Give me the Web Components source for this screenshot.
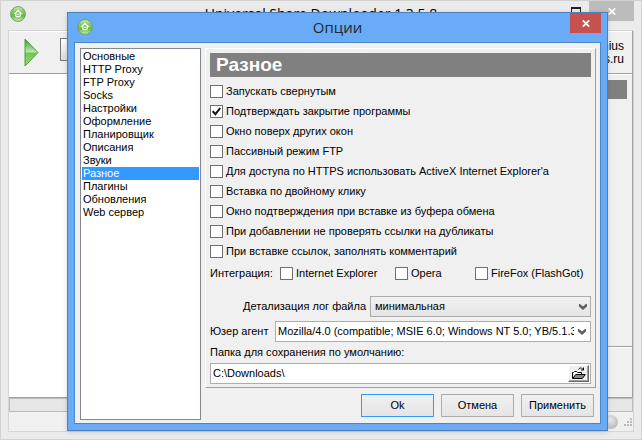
<!DOCTYPE html>
<html lang="ru">
<head>
<meta charset="utf-8">
<title>Опции</title>
<style>
html, body { height: 100%; }
body { margin: 0; overflow: hidden; font: 11px/13px "Liberation Sans", Arial, sans-serif; color: #000; }
</style>
</head>
<body>
<app-window></app-window>

<script>
const define = (name, html, setup) => {
  const template = document.createElement('template');
  template.innerHTML = html;
  customElements.define(name, class extends HTMLElement {
    constructor() {
      super();
      this.attachShadow({ mode: 'open' }).append(template.content.cloneNode(true));
    }
    connectedCallback() { if (setup) setup(this, this.shadowRoot); }
  });
};

define('app-logo', `
<style>:host { display: block; width: 16px; height: 16px; } svg { display: block; }</style>
<svg width="16" height="16" viewBox="0 0 16 16" aria-hidden="true">
  <defs><linearGradient id="g" x1="0" y1="0" x2="0" y2="1">
    <stop offset="0" stop-color="#d3f3bd"/><stop offset=".3" stop-color="#84cc66"/><stop offset=".65" stop-color="#68bb48"/><stop offset="1" stop-color="#c8fba4"/>
  </linearGradient></defs>
  <circle cx="8" cy="8" r="7.4" fill="url(#g)" stroke="#6f9f60" stroke-width="1"/>
  <path d="M8 4.400 4.900 7.500h.9v2.300c0 .5.300.8.8.8h2.800c.5 0 .8-.3.8-.8V7.500h.9z" fill="none" stroke="#fff" stroke-width="1.200"/>
  <path d="M7 9.200c0-1.500 2-1.500 2 0" fill="none" stroke="#fff"/>
</svg>`);

define('close-button', `
<style>
:host { display: block; }
button { display: grid; place-items: center; width: 100%; height: 20px; padding: 0; border: 0; background: var(--close-color, #bcbcbc); }
</style>
<button type="button" aria-label="Закрыть"><svg width="8" height="7" viewBox="0 0 8 7"><path d="M.8.3 7.2 6.7M7.2.3.8 6.7" stroke="#fff" stroke-width="1.7"/></svg></button>`);

define('category-list', `
<style>
:host { display: block; background: #fff; border: 1px solid #828790; padding: 1px; box-sizing: border-box; }
</style>
<nav aria-label="Разделы"><slot></slot></nav>`);

define('category-item', `
<style>
:host { display: block; }
button { display: block; width: 100%; height: 13px; padding: 0 0 0 1px; border: 0; background: none; font: inherit; color: inherit; text-align: left; white-space: nowrap; }
:host([current]) button { background: #3399ff; color: #fff; }
</style>
<button type="button"><slot></slot></button>`,
(host, root) => { if (host.hasAttribute('current')) root.querySelector('button').setAttribute('aria-current', 'page'); });

define('check-option', `
<style>
:host { display: block; }
label { display: flex; align-items: center; gap: 3px; height: 13px; white-space: nowrap; }
input { appearance: none; display: grid; place-items: center; flex: none; width: 13px; height: 13px; margin: 0; border: 1px solid #707070; background: #fff; }
.box { display: grid; flex: none; }
.box > * { grid-area: 1 / 1; }
svg { display: none; place-self: center; pointer-events: none; }
input:checked + svg { display: block; }
</style>
<label><span class="box"><input type="checkbox"><svg width="9" height="9" viewBox="0 0 9 9"><path d="M.7 4.2 3.4 7.2 8.2 1" fill="none" stroke="#111" stroke-width="2"/></svg></span><slot></slot></label>`,
(host, root) => { root.querySelector('input').checked = host.hasAttribute('checked'); });

const arrow = '<svg width="8" height="6" viewBox="0 0 8 6" aria-hidden="true"><path d="M0 0h1l3 2.4L7 0h1v2.4L4 6 0 2.4z" fill="#606060"/></svg>';

define('log-field', `
<style>
:host { display: flex; justify-content: flex-end; align-items: center; gap: 4px; }
.box { display: grid; flex: 0 0 58%; }
.box > * { grid-area: 1 / 1; }
select { appearance: none; box-sizing: border-box; width: 100%; height: 21px; margin: 0; padding: 0 20px 0 4px; border: 1px solid #acacac; border-radius: 0; background: linear-gradient(#f0f0f0, #e5e5e5); font: inherit; color: #000; }
svg { place-self: center end; margin-right: 4px; pointer-events: none; }
label { white-space: nowrap; }
</style>
<label for="log">Детализация лог файла</label>
<span class="box"><select id="log"><option>минимальная</option></select>${arrow}</span>`);

define('agent-field', `
<style>
:host { display: flex; align-items: center; }
label { flex: 0 0 65px; white-space: nowrap; }
.box { display: flex; flex: 1; box-sizing: border-box; min-width: 0; height: 21px; border: 1px solid #abadb3; background: #fff; }
input { flex: 1; min-width: 0; margin: 0 0 0 2px; padding: 0; border: 0; background: none; font: inherit; color: #000; }
button { display: grid; place-items: center; width: 16px; padding: 0; border: 0; background: none; }
</style>
<label for="agent">Юзер агент</label>
<span class="box"><input id="agent" type="text" value="Mozilla/4.0 (compatible; MSIE 6.0; Windows NT 5.0; YB/5.1.3)"><button type="button" aria-label="Список">${arrow}</button></span>`);

define('folder-field', `
<style>
:host { display: grid; gap: 4px; }
.box { display: flex; box-sizing: border-box; height: 21px; border: 1px solid #abadb3; background: #fff; }
input { flex: 1; min-width: 0; margin: 0 0 0 2px; padding: 0; border: 0; background: none; font: inherit; color: #000; }
button { display: grid; place-items: center; width: 21px; margin: 1px; padding: 0; border: 1px solid; border-color: #fff #696969 #696969 #fff; box-shadow: inset -1px -1px #a0a0a0; background: #f0f0f0; }
</style>
<label for="folder">Папка для сохранения по умолчанию:</label>
<span class="box"><input id="folder" type="text" value="C:\\Downloads\\"><button type="button" aria-label="Выбрать папку"><svg width="14" height="13" viewBox="0 0 14 13"><path d="M.5 11.5v-6h1l1-1h2l1 1h4v2" fill="#fff" stroke="#000"/><path d="m.7 11.5 3-4h9.6l-3 4z" fill="#888" stroke="#000"/><path d="M6.5 2.5c1-2 3.500-2 4.500 0M11.500.5v2.500h-2.500" fill="none" stroke="#000"/></svg></button></span>`);

define('push-button', `
<style>
:host { display: block; width: 73px; }
button { box-sizing: border-box; width: 100%; height: 23px; padding: 0; border: 1px solid #acacac; background: linear-gradient(#f0f0f0, #e5e5e5); font: inherit; color: #000; }
:host([default]) button { border-color: #3399ff; }
</style>
<button type="button"><slot></slot></button>`);

define('options-dialog', `
<style>
:host { display: flex; flex-direction: column; box-sizing: border-box; border: 1px solid #4b80bd; background: #6aabf7; box-shadow: 0 1px 5px rgba(0,0,0,.15); }
header { display: grid; grid-template-columns: 76px 1fr 76px; align-items: start; flex: 0 0 29px; }
app-logo { margin: 6px 0 0 9px; }
h1 { margin: 4px 0 0; font: 15px/20px "Open Sans", sans-serif; color: #1f2730; text-align: center; }
close-button { justify-self: end; width: 31px; margin-right: 6px; --close-color: #c75050; }
main { flex: 1; display: grid; grid-template-columns: 121px 1fr; column-gap: 4px; min-height: 0; margin: 0 6px 6px; border: 1px solid #4b86cc; background: #f0f0f0; padding: 5px 4px 3px 5px; }
.side { display: flex; flex-direction: column; }
section { box-sizing: border-box; padding: 4px 4px 3px; border: 1px solid; border-color: #fff #a0a0a0 #a0a0a0 #fff; }
h2 { margin: 0 0 8px; padding-left: 6px; background: #808080; color: #fff; font: bold 19px/24px "Liberation Sans", Arial, sans-serif; }
.checks { display: grid; gap: 7px; }
.integration { display: grid; grid-template-columns: 70px 115px 80px 1fr; align-items: center; margin: 9px 0 16px; }
agent-field { margin: 4px 0; }
footer { display: flex; justify-content: flex-end; gap: 7px; padding: 6px 2px 2px 0; }
</style>
<header><app-logo></app-logo><h1>Опции</h1><close-button></close-button></header>
<main>
  <category-list>
    <category-item>Основные</category-item>
    <category-item>HTTP Proxy</category-item>
    <category-item>FTP Proxy</category-item>
    <category-item>Socks</category-item>
    <category-item>Настройки</category-item>
    <category-item>Оформление</category-item>
    <category-item>Планировщик</category-item>
    <category-item>Описания</category-item>
    <category-item>Звуки</category-item>
    <category-item current>Разное</category-item>
    <category-item>Плагины</category-item>
    <category-item>Обновления</category-item>
    <category-item>Web сервер</category-item>
  </category-list>
  <div class="side">
    <section>
      <h2>Разное</h2>
      <div class="checks">
        <check-option>Запускать свернутым</check-option>
        <check-option checked>Подтверждать закрытие программы</check-option>
        <check-option>Окно поверх других окон</check-option>
        <check-option>Пассивный режим FTP</check-option>
        <check-option>Для доступа по HTTPS использовать ActiveX Internet Explorer'а</check-option>
        <check-option>Вставка по двойному клику</check-option>
        <check-option>Окно подтверждения при вставке из буфера обмена</check-option>
        <check-option>При добавлении не проверять ссылки на дубликаты</check-option>
        <check-option>При вставке ссылок, заполнять комментарий</check-option>
      </div>
      <div class="integration">
        <span>Интеграция:</span>
        <check-option>Internet Explorer</check-option>
        <check-option>Opera</check-option>
        <check-option>FireFox (FlashGot)</check-option>
      </div>
      <log-field></log-field>
      <agent-field></agent-field>
      <folder-field></folder-field>
    </section>
    <footer>
      <push-button default>Ok</push-button>
      <push-button>Отмена</push-button>
      <push-button>Применить</push-button>
    </footer>
  </div>
</main>`);

define('app-window', `
<style>
:host { position: relative; display: flex; flex-direction: column; box-sizing: border-box; height: 100%; padding: 0 7px 7px; border: 1px solid #d2d2d2; background: #ebebeb; }
header { display: grid; grid-template-columns: 130px 1fr 130px; flex: 0 0 29px; align-items: start; }
header app-logo { margin: 5px 0 0 2px; }
h1 { margin: 5px 0 0; font: 14px/16px "Open Sans", sans-serif; text-align: center; white-space: nowrap; }
.controls { display: flex; justify-content: flex-end; gap: 8px; }
.max { width: 10px; height: 10px; margin-top: 6px; padding: 0; border: 1px solid #222; border-top-width: 2px; background: none; }
.controls close-button { width: 45px; }
.client { flex: 1; display: flex; flex-direction: column; min-height: 0; border: 1px solid #d5d5d5; background: #f0f0f0; }
.toolbar { display: flex; justify-content: space-between; flex: 0 0 42px; border-right: 1px solid #a0a0a0; border-bottom: 1px solid #a0a0a0; box-shadow: inset 0 1px #fff; }
.tools { display: flex; align-items: start; gap: 20px; padding: 7px 0 0 15px; }
.stop { width: 24px; height: 23px; padding: 0; border: 1px solid #777; background: linear-gradient(#fff, #ddd); }
.play { display: block; width: 16px; height: 28px; padding: 0; border: 0; background: none; }
.credit { padding: 9px 8px 0 0; text-align: right; font-size: 12px; }
.work { flex: 1; display: grid; grid-template-columns: 1fr 37%; min-height: 0; border-right: 1px solid #a0a0a0; border-bottom: 1px solid #a0a0a0; }
.list { background: #fff; }
.info { display: grid; grid-template-rows: 1fr 51px; border-top: 1px solid #fff; }
.info i { display: block; height: 19px; margin: 5px; background: #808080; }
.info > * + * { border-top: 1px solid #a0a0a0; box-shadow: inset 0 1px #fff; }
.progress { height: 12px; border: 1px solid #bcbcbc; background: #e6e6e6; }
footer { flex: 0 0 19px; display: flex; justify-content: flex-end; align-items: center; gap: 6px; padding-right: 1px; }
.lamp { width: 14px; height: 14px; border-radius: 50%; background: radial-gradient(circle at 40% 35%, #eee, #a8a8a8); }
options-dialog { position: absolute; inset: 11px 33px 8px 66px; }
</style>
<header><app-logo></app-logo><h1>Universal Share Downloader 1.3.5.8</h1>
  <div class="controls"><button class="max" type="button" aria-label="Развернуть"></button><close-button></close-button></div></header>
<div class="client">
  <div class="toolbar">
    <div class="tools">
      <button class="play" type="button" aria-label="Старт"><svg width="16" height="29" viewBox="0 0 16 29"><defs><linearGradient id="p" x1="0" y1="0" x2="0" y2="1"><stop offset="0" stop-color="#3f9b31"/><stop offset=".48" stop-color="#bce8ae"/><stop offset=".52" stop-color="#6fc653"/><stop offset="1" stop-color="#94dc72"/></linearGradient></defs><path d="M1 1v27l13-13.500z" fill="url(#p)" stroke="#4a9f3b"/></svg></button>
      <button class="stop" type="button" aria-label="Стоп"></button>
    </div>
    <div class="credit">by Genius<br>usdownloads.ru</div>
  </div>
  <div class="work"><div class="list"></div><div class="info"><div><i></i></div><div></div></div></div>
  <div class="progress"></div>
  <footer><span class="lamp"></span><svg width="8" height="8" viewBox="0 0 8 8" fill="#b8b8b8"><path d="M6 0h2v2H6zM3 3h2v2H3zM6 3h2v2H6zM0 6h2v2H0zM3 6h2v2H3zM6 6h2v2H6z"/></svg></footer>
</div>
<options-dialog></options-dialog>`);
</script>
</body>
</html>
